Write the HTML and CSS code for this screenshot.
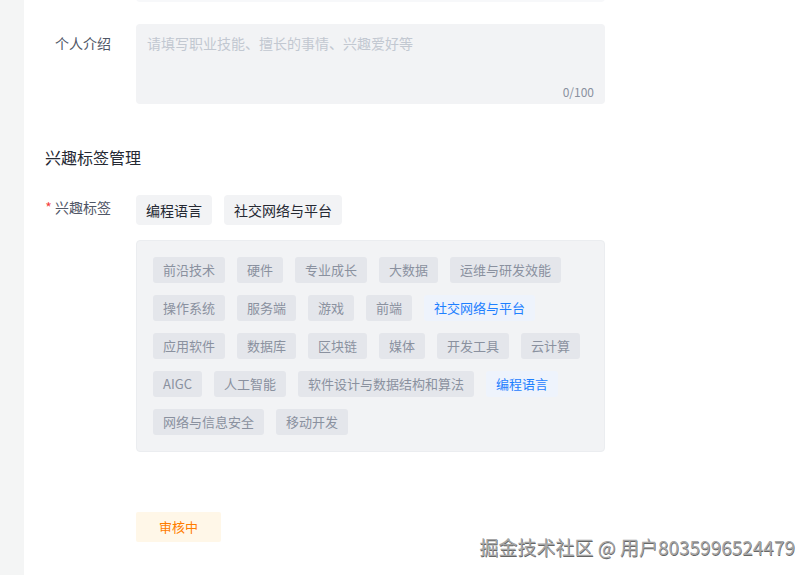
FILE: index.html
```html
<!DOCTYPE html>
<html lang="zh-CN">
<head>
  <meta charset="UTF-8">
  <meta name="viewport" content="width=device-width, initial-scale=1.0">
  <title>兴趣标签管理</title>
  <link rel="stylesheet" href="styles.css">
</head>
<body>
  <div class="page">
    <div class="side"></div>
    <div class="main">
      <!-- 上一个输入框的底部 -->
      <div class="prev_input"></div>

      <div class="form_row intro_row">
        <div class="label">个人介绍</div>
        <div class="textarea">
          <div class="placeholder">请填写职业技能、擅长的事情、兴趣爱好等</div>
          <div class="count">0/100</div>
        </div>
      </div>

      <h2 class="section_title">兴趣标签管理</h2>

      <div class="form_row tag_row">
        <div class="label"><span class="star">*</span> 兴趣标签</div>
        <div class="field">
          <div class="chosen">
            <span class="chosen_tag">编程语言</span>
            <span class="chosen_tag">社交网络与平台</span>
          </div>
          <div class="tag_panel">
            <span class="tag">前沿技术</span>
            <span class="tag">硬件</span>
            <span class="tag">专业成长</span>
            <span class="tag">大数据</span>
            <span class="tag">运维与研发效能</span>
            <span class="tag">操作系统</span>
            <span class="tag">服务端</span>
            <span class="tag">游戏</span>
            <span class="tag">前端</span>
            <span class="tag active">社交网络与平台</span>
            <span class="tag">应用软件</span>
            <span class="tag">数据库</span>
            <span class="tag">区块链</span>
            <span class="tag">媒体</span>
            <span class="tag">开发工具</span>
            <span class="tag">云计算</span>
            <span class="tag">AIGC</span>
            <span class="tag">人工智能</span>
            <span class="tag">软件设计与数据结构和算法</span>
            <span class="tag active">编程语言</span>
            <span class="tag">网络与信息安全</span>
            <span class="tag">移动开发</span>
          </div>
        </div>
      </div>

      <div class="status_row">
        <span class="status">审核中</span>
      </div>
    </div>
  </div>
  <div class="watermark">掘金技术社区 @ 用户8035996524479</div>
</body>
</html>
```

FILE: styles.css
```css
* {
  margin: 0;
  padding: 0;
  box-sizing: border-box;
}
html, body {
  width: 811px;
  height: 575px;
  overflow: hidden;
  background-color: #fff;
}
body {
  font-family: "Noto Sans CJK SC", "Noto Sans", sans-serif;
  color: #252933;
  position: relative;
}
.page {
  display: flex;
  height: 575px;
}
.side {
  width: 24px;
  background-color: #f4f5f5;
}
.main {
  flex: 1;
  padding-left: 21px;
}
.prev_input {
  width: 469px;
  height: 30px;
  margin-top: -28px;
  margin-left: 91px;
  background-color: #f7f8fa;
  border-radius: 4px;
}
.form_row {
  display: flex;
}
.label {
  width: 66px;
  margin-right: 25px;
  text-align: right;
  font-size: 14px;
  line-height: 22px;
  color: #515767;
  white-space: nowrap;
}
.intro_row {
  margin-top: 22px;
}
.intro_row .label {
  padding-top: 8px;
}
.textarea {
  display: flex;
  flex-direction: column;
  justify-content: space-between;
  width: 469px;
  height: 80px;
  padding: 8px 11px 2px 11px;
  background-color: #f2f3f5;
  border-radius: 4px;
}
.placeholder {
  font-size: 14px;
  line-height: 22px;
  color: #c2c8d1;
}
.count {
  text-align: right;
  font-size: 12px;
  line-height: 20px;
  color: #8a919f;
}
.section_title {
  margin-top: 41px;
  font-size: 16px;
  line-height: 24px;
  font-weight: 400;
  color: #252933;
}
.tag_row {
  margin-top: 26px;
}
.tag_row .label {
  padding-top: 1px;
}
.star {
  color: #f53f3f;
}
.field {
  width: 469px;
}
.chosen {
  display: flex;
  gap: 12px;
}
.chosen_tag {
  height: 30px;
  line-height: 30px;
  padding: 0 10px;
  font-size: 14px;
  color: #252933;
  background-color: #f2f3f5;
  border-radius: 4px;
}
.tag_panel {
  display: flex;
  flex-wrap: wrap;
  gap: 12px;
  margin-top: 15px;
  padding: 16px;
  background-color: #f2f3f5;
  border: 1px solid #ebedf0;
  border-radius: 4px;
}
.tag {
  height: 26px;
  line-height: 26px;
  padding: 0 10px;
  font-size: 13px;
  color: #8a919f;
  background-color: #e4e6eb;
  border-radius: 3px;
}
.tag.active {
  color: #1e80ff;
  background-color: #eef3fc;
}
.status_row {
  margin-top: 60px;
  padding-left: 91px;
}
.status {
  display: inline-block;
  height: 30px;
  line-height: 30px;
  padding: 0 23px;
  font-size: 13px;
  color: #ff7d00;
  background-color: #fff7e8;
  border-radius: 2px;
}
.watermark {
  position: absolute;
  right: 16px;
  top: 535px;
  font-size: 19px;
  line-height: 24px;
  color: #a6a6a6;
  text-shadow: 0.5px 0.5px 0.5px #666;
  white-space: nowrap;
}
```
